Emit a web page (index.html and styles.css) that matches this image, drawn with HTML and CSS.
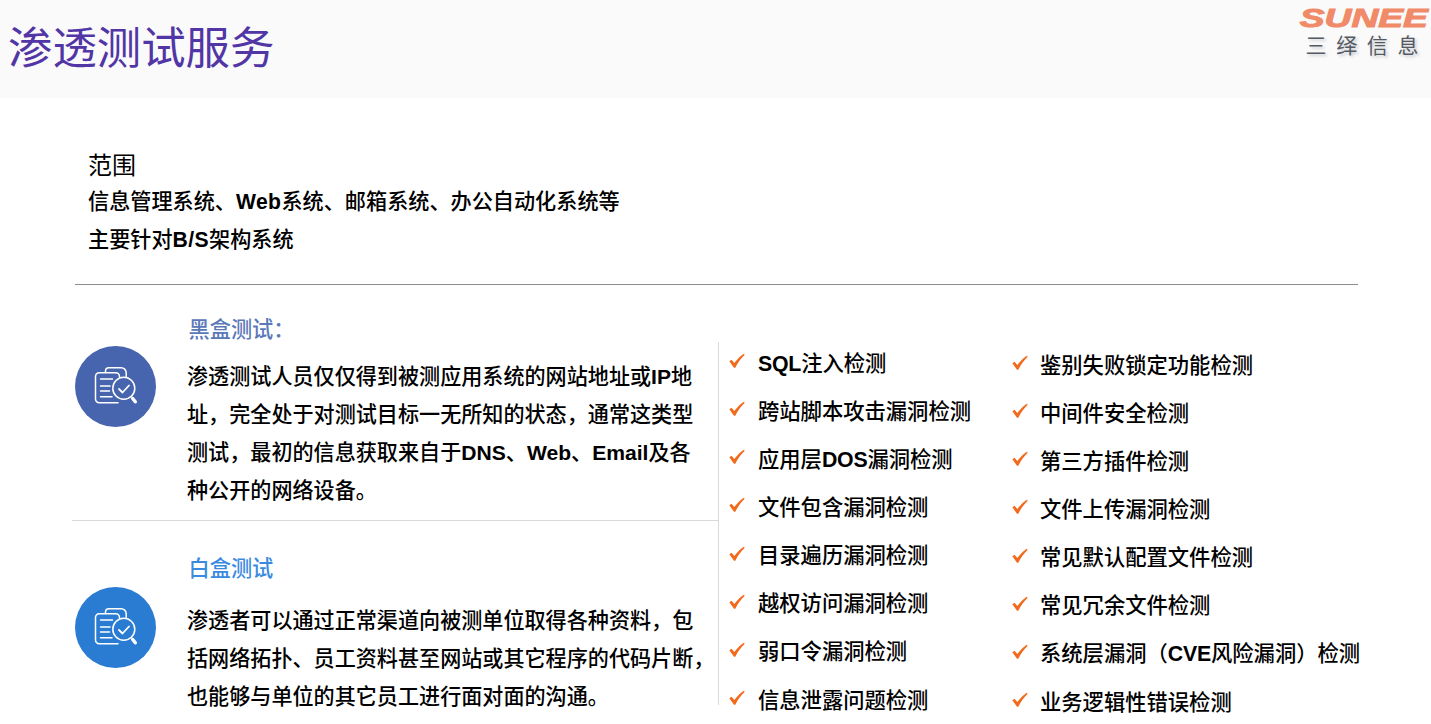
FILE: index.html
```html
<!DOCTYPE html>
<html lang="zh-CN">
<head>
<meta charset="utf-8">
<title>渗透测试服务</title>
<link rel="stylesheet" href="styles.css">
</head>
<body>
<svg class="defs" width="0" height="0" aria-hidden="true">
  <symbol id="doc" viewBox="0 0 44 44">
    <g fill="none" stroke="#fff" stroke-linecap="round" stroke-linejoin="round">
      <path stroke-width="1.5" d="M11.500 7V6a3.300 3.300 0 0 1 3.300-3.300H27a5 5 0 0 1 5.200 5V12"/>
      <path stroke-width="1.5" d="M25.500 12V11.500a3.800 3.800 0 0 0-3.800-3.800H5.200a3.700 3.700 0 0 0-3.700 3.700V34a3.700 3.700 0 0 0 3.700 3.700H24"/>
      <path stroke-width="1.5" d="M6.500 14H18.500M6.500 21H16M6.500 26H15.500M6.500 31.700H18"/>
      <circle stroke-width="1.5" cx="29.800" cy="23.300" r="11"/>
      <path stroke-width="1.8" d="M25 24l3.500 3.500L35 20.500"/>
      <path stroke-width="1.2" d="M37.500 31.500l1.200 1.500"/>
      <path stroke-width="3.400" d="M38.700 33.500l2.600 3.300"/>
    </g>
  </symbol>
  <symbol id="tick" viewBox="0 0 16 16">
    <path fill="#f26a1b" d="M.3 8.200l2.300-1.400 2.700 3.300C8 6.500 11 3 14.800.8l.9.9C11.800 5.500 8.800 9.500 6.300 14.800H5z"/>
  </symbol>
</svg>

<header class="top">
  <h1 class="title">渗透测试服务</h1>
  <div class="logo">
    <div class="logo-en">SUNEE</div>
    <div class="logo-cn">三绎信息</div>
  </div>
</header>

<main class="page">
  <section class="scope">
    <h2 class="scope-head">范围</h2>
    <p class="scope-line">信息管理系统、<b>Web</b>系统、邮箱系统、办公自动化系统等</p>
    <p class="scope-line">主要针对<b>B/S</b>架构系统</p>
  </section>

  <div class="rule"></div>

  <section class="split">
    <div class="left">
      <article class="box box-black">
        <div class="badge badge-black"><svg class="doc"><use href="#doc"/></svg></div>
        <div class="box-body">
          <h3 class="box-title title-black">黑盒测试：</h3>
          <p class="box-text">渗透测试人员仅仅得到被测应用系统的网站地址或<b>IP</b>地址，完全处于对测试目标一无所知的状态，通常这类型测试，最初的信息获取来自于<b>DNS</b>、<b>Web</b>、<b>Email</b>及各种公开的网络设备。</p>
        </div>
      </article>
      <article class="box box-white">
        <div class="badge badge-white"><svg class="doc"><use href="#doc"/></svg></div>
        <div class="box-body">
          <h3 class="box-title title-white">白盒测试</h3>
          <p class="box-text box-text-fixed">渗透者可以通过正常渠道向被测单位取得各种资料，包<br>括网络拓扑、员工资料甚至网站或其它程序的代码片断，<br>也能够与单位的其它员工进行面对面的沟通。</p>
        </div>
      </article>
    </div>
    <div class="right">
      <ul class="checks checks-a">
        <li><svg class="tick"><use href="#tick"/></svg><span><b>SQL</b>注入检测</span></li>
        <li><svg class="tick"><use href="#tick"/></svg><span>跨站脚本攻击漏洞检测</span></li>
        <li><svg class="tick"><use href="#tick"/></svg><span>应用层<b>DOS</b>漏洞检测</span></li>
        <li><svg class="tick"><use href="#tick"/></svg><span>文件包含漏洞检测</span></li>
        <li><svg class="tick"><use href="#tick"/></svg><span>目录遍历漏洞检测</span></li>
        <li><svg class="tick"><use href="#tick"/></svg><span>越权访问漏洞检测</span></li>
        <li><svg class="tick"><use href="#tick"/></svg><span>弱口令漏洞检测</span></li>
        <li><svg class="tick"><use href="#tick"/></svg><span>信息泄露问题检测</span></li>
      </ul>
      <ul class="checks checks-b">
        <li><svg class="tick"><use href="#tick"/></svg><span>鉴别失败锁定功能检测</span></li>
        <li><svg class="tick"><use href="#tick"/></svg><span>中间件安全检测</span></li>
        <li><svg class="tick"><use href="#tick"/></svg><span>第三方插件检测</span></li>
        <li><svg class="tick"><use href="#tick"/></svg><span>文件上传漏洞检测</span></li>
        <li><svg class="tick"><use href="#tick"/></svg><span>常见默认配置文件检测</span></li>
        <li><svg class="tick"><use href="#tick"/></svg><span>常见冗余文件检测</span></li>
        <li><svg class="tick"><use href="#tick"/></svg><span>系统层漏洞（<b>CVE</b>风险漏洞）检测</span></li>
        <li><svg class="tick"><use href="#tick"/></svg><span>业务逻辑性错误检测</span></li>
      </ul>
    </div>
  </section>
</main>
</body>
</html>
```
FILE: styles.css
```css
* { box-sizing: border-box; }
html, body { margin: 0; padding: 0; height: 724px; overflow: hidden; background: #fff; }
body { font-family: "Liberation Sans", "Noto Sans CJK SC", sans-serif; color: #000; }
b { font-weight: 700; }
h1, h2, h3, p, ul { margin: 0; padding: 0; font-weight: 400; }
.defs { display: block; height: 0; }

.top { height: 98px; background: #fafafa; display: flex; justify-content: space-between; padding: 0 2px 0 8px; }
.title { font-size: 44.4px; line-height: 48px; margin-top: 25px; color: #5236a6; }
.logo { width: 132px; display: flex; flex-direction: column; align-items: center; padding-top: 5px; }
.logo-en { font: italic 700 26px/26px "Liberation Sans", sans-serif; color: #f08a68; -webkit-text-stroke: 1px #f08a68; transform: scaleX(1.43); margin-left: 2px; }
.logo-cn { font-size: 21px; line-height: 28px; letter-spacing: 9.7px; margin-right: -9.7px; color: #555a62; text-shadow: 2px 2px 3px #c6cad0; margin-top: 1px; margin-left: -2px; }

.page { padding: 0 73px 0 72px; }
.scope { padding: 51px 0 0 16px; height: 186px; }
.scope-head { font-size: 24px; line-height: 34px; }
.scope-line { font-size: 21.15px; line-height: 38px; font-weight: 500; }
.scope-line b { letter-spacing: .4px; }

.rule { height: 1px; background: #8c8c8c; margin-left: 3px; }

.split { display: flex; padding-top: 57px; }
.left { width: 647px; height: 363px; border-right: 1px solid #d9d9d9; flex: none; }
.box { display: flex; border-bottom: 1px solid #d9d9d9; }
.box-black { height: 205px; margin-top: -26px; }
.box-white { height: 184px; border-bottom: 0; }
.badge { width: 81px; height: 81px; border-radius: 50%; margin-left: 3px; flex: none; display: flex; align-items: center; justify-content: center; }
.badge-black { background: #4764ae; margin-top: 30px; }
.badge-white { background: #2a7cd3; margin-top: 66px; }
.doc { width: 44px; height: 44px; }
.box-body { margin-left: 31px; width: 524px; }
.box-title { font-size: 21.2px; line-height: 28px; margin-left: 1.5px; font-weight: 500; }
.title-black { color: #5b78b8; }
.title-white { color: #3a8ae0; margin-top: 34px; }
.box-text { font-size: 21.1px; line-height: 38px; font-weight: 500; margin-top: 14px; }
.box-text-fixed { white-space: nowrap; margin-top: 19px; }

.right { display: flex; flex: none; }
.checks { list-style: none; width: 283px; padding-left: 10px; }
.checks li { height: 48.15px; display: flex; align-items: center; white-space: nowrap; font-size: 21.3px; font-weight: 500; }
.checks li b { letter-spacing: -.2px; }
.checks-a { margin-top: -5px; }
.checks-b { margin-top: -3px; }
.tick { width: 16px; height: 16px; margin-right: 13px; flex: none; }
.checks-b .tick { margin-right: 12px; }
```
